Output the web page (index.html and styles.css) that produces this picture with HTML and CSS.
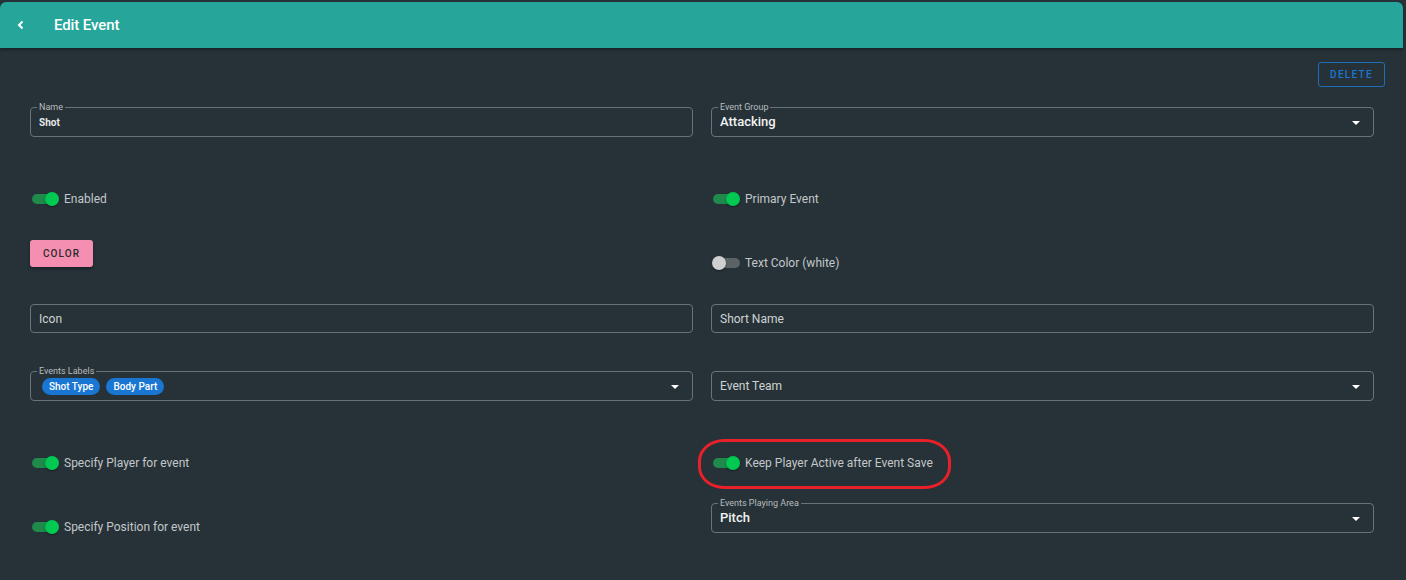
FILE: index.html
```html
<!DOCTYPE html>
<html lang="en">
<head>
<meta charset="utf-8">
<title>Edit Event</title>
<link rel="stylesheet" href="styles.css">
</head>
<body>
<div class="app">
  <header class="topbar">
    <button class="back" aria-label="Back">
      <svg width="10" height="10" viewBox="0 0 10 10"><path d="M6.5 1.5 L3 5 L6.5 8.5" fill="none" stroke="#fff" stroke-width="2"/></svg>
    </button>
    <h1 class="title">Edit Event</h1>
  </header>
  <main class="content">
    <div class="actions">
      <button class="btn-outline">DELETE</button>
    </div>

    <div class="row row-fields">
      <div class="field">
        <span class="field-label">Name</span>
        <span class="field-value small">Shot</span>
      </div>
      <div class="field select">
        <span class="field-label">Event Group</span>
        <span class="field-value">Attacking</span>
        <span class="caret"></span>
      </div>
    </div>

    <div class="row row-toggles">
      <label class="toggle"><span class="track on"><span class="thumb"></span></span><span class="toggle-text">Enabled</span></label>
      <label class="toggle"><span class="track on"><span class="thumb"></span></span><span class="toggle-text">Primary Event</span></label>
    </div>

    <div class="row row-color">
      <div class="cell"><button class="btn-color">COLOR</button></div>
      <div class="cell cell-low"><label class="toggle"><span class="track off"><span class="thumb"></span></span><span class="toggle-text">Text Color (white)</span></label></div>
    </div>

    <div class="row row-plain">
      <div class="field"><span class="placeholder">Icon</span></div>
      <div class="field"><span class="placeholder">Short Name</span></div>
    </div>

    <div class="row row-labels">
      <div class="field select">
        <span class="field-label">Events Labels</span>
        <div class="chips">
          <span class="chip">Shot Type</span>
          <span class="chip">Body Part</span>
        </div>
        <span class="caret"></span>
      </div>
      <div class="field select">
        <span class="placeholder">Event Team</span>
        <span class="caret"></span>
      </div>
    </div>

    <div class="row row-toggles2">
      <label class="toggle"><span class="track on"><span class="thumb"></span></span><span class="toggle-text">Specify Player for event</span></label>
      <div class="annotated">
        <label class="toggle"><span class="track on"><span class="thumb"></span></span><span class="toggle-text">Keep Player Active after Event Save</span></label>
        <span class="highlight"></span>
      </div>
    </div>

    <div class="row row-last">
      <div class="cell cell-mid"><label class="toggle"><span class="track on"><span class="thumb"></span></span><span class="toggle-text">Specify Position for event</span></label></div>
      <div class="field select">
        <span class="field-label">Events Playing Area</span>
        <span class="field-value">Pitch</span>
        <span class="caret"></span>
      </div>
    </div>
  </main>
</div>
</body>
</html>
```

FILE: styles.css
```css
* { box-sizing: border-box; }
html, body { margin: 0; padding: 0; }
body {
  background: #263238;
  font-family: Roboto, "Liberation Sans", Arial, sans-serif;
  color: #e0e0e0;
  width: 1406px;
  height: 580px;
  overflow: hidden;
}
.app {
  width: 1403px;
  padding-top: 2px;
}
.topbar {
  height: 46px;
  background: #26a69a;
  border-radius: 6px 6px 0 0;
  display: flex;
  align-items: center;
  box-shadow: 0 2px 3px rgba(0,0,0,0.35);
}
.back {
  background: none;
  border: 0;
  padding: 0;
  margin-left: 15px;
  width: 12px;
  height: 12px;
  display: flex;
  align-items: center;
  justify-content: center;
}
.title {
  margin: 0 0 0 27px;
  font-size: 15px;
  font-weight: 500;
  color: #fff;
  letter-spacing: -0.1px;
}
.content {
  padding: 14px 30px 0 30px;
}
.actions {
  display: flex;
  justify-content: flex-end;
  margin-right: -12px;
  height: 25px;
}
.btn-outline {
  height: 25px;
  width: 67px;
  border: 1px solid #1f6fb8;
  border-radius: 3px;
  background: transparent;
  color: #1976d2;
  font-family: inherit;
  font-size: 10px;
  font-weight: 500;
  letter-spacing: 1.3px;
  padding: 0;
}
.row {
  display: grid;
  grid-template-columns: 663px 663px;
  column-gap: 18px;
  align-items: start;
}
.row-fields { margin-top: 20px; height: 30px; }
.row-toggles { margin-top: 50px; height: 24px; }
.row-color { margin-top: 29px; height: 34px; }
.row-plain { margin-top: 30px; height: 29px; }
.row-labels { margin-top: 38px; height: 30px; }
.row-toggles2 { margin-top: 50px; height: 24px; }
.row-last { margin-top: 28px; height: 30px; }

.cell-low { padding-top: 11px; }
.cell-mid { padding-top: 12px; }

.field {
  position: relative;
  height: 30px;
  border: 1px solid #6a7377;
  border-radius: 4px;
  display: flex;
  align-items: center;
  padding: 0 8px;
}
.row-plain .field { height: 29px; }
.field-label {
  position: absolute;
  top: -6px;
  left: 6px;
  padding: 0 2px;
  background: #263238;
  font-size: 9px;
  line-height: 10px;
  color: #b8bcbe;
}
.field-value {
  font-size: 13px;
  font-weight: 500;
  color: #f2f2f2;
  margin-top: -2px;
}
.field-value.small {
  font-size: 10px;
  font-weight: 700;
  color: #e8e8e8;
  margin-top: 0;
}
.placeholder {
  font-size: 12px;
  color: #cfd2d3;
}
.caret {
  position: absolute;
  right: 13px;
  top: 50%;
  margin-top: -1px;
  width: 0;
  height: 0;
  border-left: 4px solid transparent;
  border-right: 4px solid transparent;
  border-top: 4px solid #fff;
}
.chips {
  display: flex;
  gap: 6px;
  padding-left: 3px;
}
.chip {
  height: 17px;
  line-height: 17px;
  padding: 0 7px;
  border-radius: 9px;
  background: #1976d2;
  color: #fff;
  font-size: 10px;
  font-weight: 500;
}
.toggle {
  display: flex;
  align-items: center;
  height: 24px;
  cursor: pointer;
}
.track {
  position: relative;
  width: 27px;
  height: 10px;
  border-radius: 5px;
  margin-left: 2px;
  margin-right: 5px;
}
.track.on { background: #1f8a4c; }
.track.off { background: #5b6366; }
.thumb {
  position: absolute;
  top: -2px;
  width: 14px;
  height: 14px;
  border-radius: 50%;
  box-shadow: 0 1px 2px rgba(0,0,0,0.4);
}
.track.on .thumb { right: 0; background: #00c853; }
.track.off .thumb { left: -1px; background: #cfcfcf; }
.toggle-text {
  font-size: 12px;
  color: #c4c7c9;
}
.btn-color {
  width: 63px;
  height: 27px;
  border: 0;
  border-radius: 3px;
  background: #f48fb1;
  color: #2b2b2b;
  font-family: inherit;
  font-size: 10px;
  font-weight: 500;
  letter-spacing: 1.1px;
  padding: 0;
  box-shadow: 0 2px 3px rgba(0,0,0,0.35);
}
.annotated { position: relative; }
.highlight {
  position: absolute;
  left: -13px;
  top: -12px;
  width: 253px;
  height: 50px;
  border: 3px solid #e8202a;
  border-radius: 26px / 22px;
  pointer-events: none;
}
```
